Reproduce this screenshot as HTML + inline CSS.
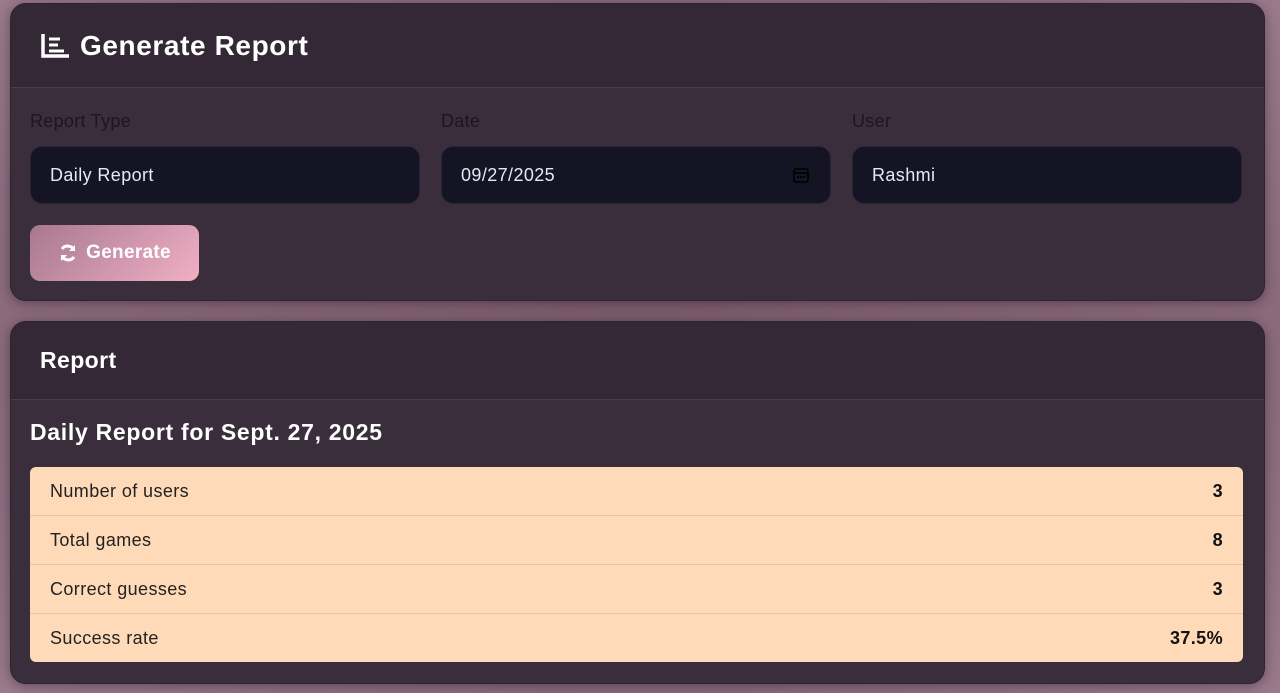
<!DOCTYPE html>
<html><head><style>
body{margin:0;width:1280px;height:693px;background:radial-gradient(ellipse at center,#7a5a6c 0%,#8a6a7c 70%,#9a7a8c 100%);font-family:"Liberation Sans",sans-serif;overflow:hidden;position:relative}
.card{position:absolute;left:10px;width:1253px;background:#3a2d3c;border-radius:16px;box-shadow:0 2px 12px rgba(0,0,0,.35);overflow:hidden;border:1px solid #2e2431}
.hd{background:#342836;border-bottom:1px solid #4a3c4b;color:#fff;display:flex;align-items:center}
.lbl{position:absolute;top:107px;color:#1c1620;font-size:18px;letter-spacing:.3px}
.inp{position:absolute;top:142px;width:390px;height:58px;background:#141424;border-radius:12px;color:#e8e8f0;font-size:18px;line-height:56px;padding-left:19px;box-sizing:border-box;border:1px solid #2a2536;letter-spacing:.4px}
.btn{position:absolute;left:19px;top:221px;width:169px;height:56px;border-radius:10px;background:linear-gradient(135deg,#a87890,#f0b0c4);color:#fff;font-weight:bold;font-size:19px;display:flex;align-items:center;justify-content:center;gap:8px;letter-spacing:.3px}
table{position:absolute;left:19px;top:145px;width:1213px;border-collapse:collapse;background:#ffdab9;border-radius:6px;overflow:hidden}
td{height:48px;padding:0 20px;font-size:18px;color:#222;border-bottom:1px solid #e8c4a4;letter-spacing:.4px}
tr:last-child td{border-bottom:none}
td.v{text-align:right;font-weight:bold;color:#111}
</style></head><body>
<div class="card" style="top:3px;height:296px">
 <div class="hd" style="height:83px;padding-left:29px;font-size:28px;font-weight:bold;letter-spacing:.6px">
  <svg width="30" height="26" viewBox="0 0 30 26" style="margin-right:10px"><path d="M3 1V23H29" stroke="#fff" stroke-width="3.5" fill="none"/><path d="M9 6H20M9 12H18M9 18H24" stroke="#fff" stroke-width="3"/></svg>Generate Report</div>
 <div class="lbl" style="left:19px">Report Type</div>
 <div class="lbl" style="left:430px">Date</div>
 <div class="lbl" style="left:841px">User</div>
 <div class="inp" style="left:19px">Daily Report</div>
 <div class="inp" style="left:430px">09/27/2025<svg width="18" height="18" viewBox="0 0 18 18" style="position:absolute;right:20px;top:19px"><rect x="2" y="3" width="14" height="13" rx="2" fill="none" stroke="#000" stroke-width="1.6"/><path d="M2 7H16" stroke="#000" stroke-width="1.6"/><rect x="5" y="10" width="2" height="2" fill="#000"/><rect x="8" y="10" width="2" height="2" fill="#000"/><rect x="11" y="10" width="2" height="2" fill="#000"/></svg></div>
 <div class="inp" style="left:841px">Rashmi</div>
 <div class="btn"><svg width="20" height="20" viewBox="0 0 20 20"><path d="M16 7A7 7 0 0 0 4 6M4 13A7 7 0 0 0 16 14" stroke="#fff" stroke-width="3" fill="none"/><path d="M17 2V8H11Z M3 18V12H9Z" fill="#fff"/></svg>Generate</div>
</div>
<div class="card" style="top:321px;height:361px">
 <div class="hd" style="height:77px;padding-left:29px;font-size:23px;font-weight:bold;letter-spacing:.4px">Report</div>
 <div style="position:absolute;left:19px;top:97px;color:#fff;font-size:23px;font-weight:bold;letter-spacing:.7px">Daily Report for Sept. 27, 2025</div>
 <table>
  <tr><td>Number of users</td><td class="v">3</td></tr>
  <tr><td>Total games</td><td class="v">8</td></tr>
  <tr><td>Correct guesses</td><td class="v">3</td></tr>
  <tr><td>Success rate</td><td class="v">37.5%</td></tr>
 </table>
</div>
</body></html>
